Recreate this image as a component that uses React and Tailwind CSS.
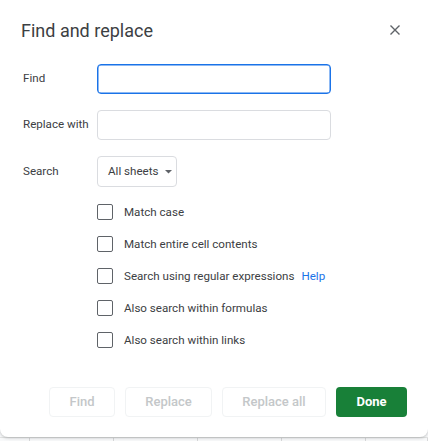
import React from "react";

const font = { fontFamily: "Roboto, 'Liberation Sans', Arial, sans-serif" };

function Checkbox({ label, help }) {
  return (
    <div className="flex items-center h-[16px]">
      <div className="w-[16px] h-[16px] border-[1.5px] border-[#5f6368] rounded-[2px] shrink-0" />
      <span className="ml-[11px] text-[11.6px] text-[#3c4043] leading-[16px]">{label}</span>
      {help && <span className="ml-[7px] text-[11.6px] text-[#1a73e8] leading-[16px]">Help</span>}
    </div>
  );
}

function DisabledButton({ children, w }) {
  return (
    <div
      className={`${w} h-[30px] border border-[#f1f3f4] rounded-[4px] flex items-center justify-center text-[13px] font-medium text-[#c4c7c9]`}
    >
      {children}
    </div>
  );
}

export default function App() {
  const cols = [30, 84, 84, 84, 84, 62];
  return (
    <div className="w-[428px] h-[441px] bg-[#f8f9fa] flex flex-col overflow-hidden" style={font}>
      <div className="h-[437px] shrink-0 bg-white rounded-b-[8px] shadow-[0_1px_3px_rgba(60,64,67,0.3)] flex flex-col relative z-10">
        <div className="flex items-center justify-between pl-[21px] pr-[27px] pt-[19px] h-[43px]">
          <span className="text-[18px] leading-[24px] text-[#3c4043]">Find and replace</span>
          <svg width="12" height="12" viewBox="0 0 12 12" className="mt-[-2px]">
            <path d="M1.5 1.5 L10.5 10.5 M10.5 1.5 L1.5 10.5" stroke="#5f6368" strokeWidth="1.4" fill="none" />
          </svg>
        </div>

        <div className="flex flex-col gap-[16px] mt-[21px] pl-[23px]">
          <div className="flex items-center">
            <span className="w-[74px] text-[11.6px] text-[#3c4043]">Find</span>
            <div className="w-[234px] h-[30px] border border-[#1a73e8] rounded-[4px] shadow-[inset_0_0_0_0.5px_#1a73e8]" />
          </div>
          <div className="flex items-center">
            <span className="w-[74px] text-[11.6px] text-[#3c4043]">Replace with</span>
            <div className="w-[234px] h-[30px] border border-[#dadce0] rounded-[4px]" />
          </div>
          <div className="flex items-center">
            <span className="w-[74px] text-[11.6px] text-[#3c4043]">Search</span>
            <div className="w-[80px] h-[31px] border border-[#dadce0] rounded-[4px] flex items-center pl-[10px]">
              <span className="text-[11.6px] text-[#3c4043]">All sheets</span>
              <svg width="7" height="4" viewBox="0 0 7 4" className="ml-[6px] mt-[1px]">
                <path d="M0 0 L7 0 L3.5 3.5 Z" fill="#5f6368" />
              </svg>
            </div>
          </div>
        </div>

        <div className="flex flex-col gap-[16px] mt-[17px] pl-[97px]">
          <Checkbox label="Match case" />
          <Checkbox label="Match entire cell contents" />
          <Checkbox label="Search using regular expressions" help />
          <Checkbox label="Also search within formulas" />
          <Checkbox label="Also search within links" />
        </div>

        <div className="flex justify-end gap-[10px] mt-[39px] pr-[21px]">
          <DisabledButton w="w-[66px]">Find</DisabledButton>
          <DisabledButton w="w-[87px]">Replace</DisabledButton>
          <DisabledButton w="w-[104px]">Replace all</DisabledButton>
          <div className="w-[71px] h-[30px] bg-[#188038] rounded-[4px] flex items-center justify-center text-[13px] font-bold text-white">
            Done
          </div>
        </div>
      </div>
      <div className="flex flex-1 border-t border-[#e2e3e3]">
        {cols.map((w, i) => (
          <div key={i} style={{ width: w }} className="h-full border-r border-[#d7d8d9] shrink-0" />
        ))}
      </div>
    </div>
  );
}
